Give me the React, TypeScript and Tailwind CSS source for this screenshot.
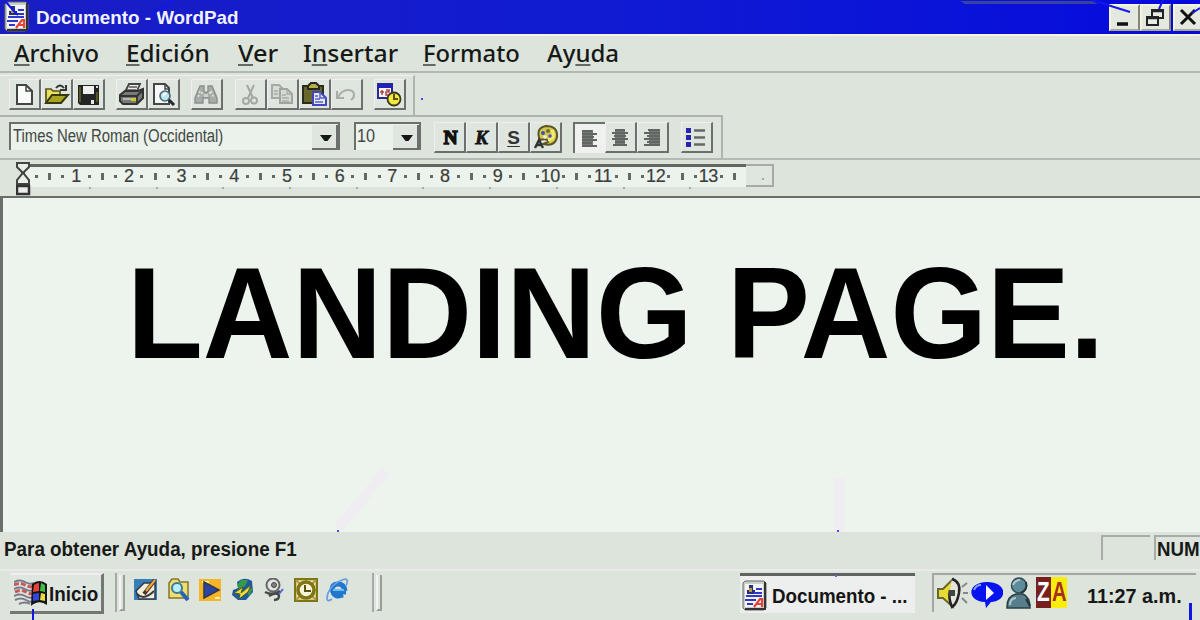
import { useLayoutEffect, useRef } from "react";
import type { ReactNode } from "react";

/* Text squeezed or stretched horizontally to a given width. */
function Fit({ w, className = "", children }: { w: number; className?: string; children: ReactNode }) {
  const ref = useRef<HTMLSpanElement>(null);
  useLayoutEffect(() => {
    const el = ref.current;
    if (el) el.style.transform = `scaleX(${w / el.offsetWidth})`;
  }, [w]);
  return (
    <span className={`block shrink-0 ${className}`} style={{ width: w }}>
      <span ref={ref} className="inline-block origin-left whitespace-nowrap">{children}</span>
    </span>
  );
}

function Svg({ w, h, className = "", children }: { w: number; h: number; className?: string; children: ReactNode }) {
  return (
    <svg width={w} height={h} viewBox={`0 0 ${w} ${h}`} fill="none" className={`block shrink-0 ${className}`}>
      {children}
    </svg>
  );
}

function Tool({ children, pressed = false }: { children?: ReactNode; pressed?: boolean }) {
  return (
    <div
      className={
        pressed
          ? "h-[31px] w-8 shrink-0 border-t-2 border-l-2 border-[#6c706c] bg-[#eef1ee]"
          : "h-[31px] w-8 shrink-0 border-r-2 border-b-2 border-t border-l border-t-[#f1edf1] border-l-[#f1edf1] border-r-[#6c706c] border-b-[#6c706c] bg-[#dfe6df]"
      }
    >
      {children}
    </div>
  );
}

const Group = ({ children, className = "" }: { children: ReactNode; className?: string }) => (
  <div className={`flex shrink-0 ${className}`}>{children}</div>
);

const DocIcon = () => (
  <Svg w={27} h={31}>
    <path d="M2 3 4 1H23L25 3V28L23 30H4L2 28Z" fill="#c8cec8" stroke="#6b6b63" />
    <path d="M24 2V29H4" stroke="#333" strokeWidth="2" />
    <path d="M4 4H22V27H4Z" fill="#f4f5fa" />
    <path d="M6 10H8V5H12V10H14V14H6Z" fill="#263080" />
    <path d="M8 8H11V12H8Z" fill="#b79a42" />
    <path d="M15 9H21M13 13H21M5 16H14M12 16H21M4 20H15M6 24H12" stroke="#3038c8" strokeWidth="2" />
    <path d="M13 27 19 19H21V27M15 24H22" stroke="#e34438" strokeWidth="2.2" />
  </Svg>
);

const NewIcon = () => (
  <Svg w={28} h={28}><path d="M7 5H16L22 11V24H7Z" fill="#fafcfa" stroke="#444" strokeWidth="2" /><path d="M16 5V11H22" stroke="#444" strokeWidth="1.5" /></Svg>
);
const OpenIcon = () => (
  <Svg w={28} h={28}>
    <path d="M4 9H9L11 11H18V22H4Z" fill="#e9e15c" stroke="#55511c" strokeWidth="1.7" />
    <path d="M4 23 10 15H26L19 23Z" fill="#a9a51e" stroke="#39370e" strokeWidth="2" />
    <path d="M14 8Q18 3 22 8M24 5V10H18" stroke="#333" strokeWidth="2" />
  </Svg>
);
const SaveIcon = () => (
  <Svg w={28} h={28}>
    <path d="M4 5H25V25H6L4 23Z" fill="#242424" />
    <path d="M9 6H20V14H9Z" fill="#edf0ed" /><path d="M22 6H24V8H22Z" fill="#ddd" />
    <path d="M6 7V22M23 12V22" stroke="#68661f" strokeWidth="1.5" /><path d="M17 20H20V24H17Z" fill="#e8e8e8" />
  </Svg>
);
const PrintIcon = () => (
  <Svg w={28} h={28}>
    <path d="M8 12 12 4H23L19 13Z" fill="#eef0ee" stroke="#444" strokeWidth="1.8" />
    <path d="M12 7H20M10 10H19" stroke="#555" strokeWidth="1.5" />
    <path d="M3 15 8 11H21L26 9V18L20 24H6L3 21Z" fill="#777c77" stroke="#333" strokeWidth="2" />
    <path d="M4 16H20V23M20 16 25 11" stroke="#333" strokeWidth="1.8" /><path d="M6 19H17" stroke="#c6ccc6" strokeWidth="1.5" /><path d="M14 18H19V21H14Z" fill="#d5c828" />
  </Svg>
);
const PreviewIcon = () => (
  <Svg w={28} h={28}>
    <path d="M5 4H16L20 8V24H5Z" fill="#f6f7f6" stroke="#464646" strokeWidth="2" /><path d="M16 4V9H20" stroke="#464646" strokeWidth="1.5" />
    <circle cx="16" cy="16" r="5" fill="#bae5ef" stroke="#496570" strokeWidth="1.6" /><path d="M14 16 17 13" stroke="#fff" strokeWidth="2" /><path d="M20 20 25 25" stroke="#232733" strokeWidth="3" />
  </Svg>
);
const FindIcon = () => (
  <Svg w={28} h={28}>
    <path d="M8 6H12V11L14 13 16 11V6H20L25 18V23H17V18H11V23H3V18Z" fill="#a9ada9" stroke="#8c908c" strokeWidth="1.4" />
    <path d="M8 11 6 18M19 11 22 18M10 12V16M18 12V16" stroke="#e3e8e3" strokeWidth="1.5" strokeDasharray="2 2" /><path d="M12 14H16V17H12Z" fill="#cdd2cd" />
  </Svg>
);
const CutIcon = () => (
  <Svg w={28} h={28}>
    <path d="M11 5 17 18M18 5 12 18" stroke="#a3a8a3" strokeWidth="2" /><circle cx="10" cy="21" r="3" stroke="#a3a8a3" strokeWidth="2" /><circle cx="18" cy="20.5" r="3" stroke="#a3a8a3" strokeWidth="2" />
  </Svg>
);
const CopyIcon = () => (
  <Svg w={28} h={28}>
    <path d="M4 5H11L15 9V18H4Z" fill="#d5dbd5" stroke="#a5aaa5" strokeWidth="2" /><path d="M12 9H19L24 14V23H12Z" fill="#d5dbd5" stroke="#a0a5a0" strokeWidth="2" />
    <path d="M19 9V14H24M6 11H10M6 14H10M14 15H18M14 18H21M14 21H21" stroke="#a8ada8" strokeWidth="1.3" />
  </Svg>
);
const PasteIcon = () => (
  <Svg w={28} h={28}>
    <path d="M3 6H23V23H3Z" fill="#69672b" stroke="#2c2c1b" strokeWidth="2" /><path d="M8 9V6L11 3H16L19 6V9Z" fill="#b5ae4a" stroke="#28281c" strokeWidth="2" />
    <path d="M13 12H20L26 18V25H13Z" fill="#e5e6fa" stroke="#4048b8" strokeWidth="2" /><path d="M20 12V18H26M15 16H18M15 19H20M15 22H23" stroke="#5960c6" strokeWidth="1.5" />
  </Svg>
);
const UndoIcon = () => (
  <Svg w={28} h={28}><path d="M5 11V18H12M6 17Q10 10 16 10 22 10 22 15 22 18 19 20" stroke="#a8ada8" strokeWidth="2" /></Svg>
);
const DateIcon = () => (
  <Svg w={30} h={30}>
    <path d="M3 4H17V18H3Z" fill="#f7f7fb" stroke="#292c8b" strokeWidth="2" /><path d="M3 4H17V8H3Z" fill="#2222bb" /><path d="M7 10V15M5 12H9M11 10H14V12H11V15H14" stroke="#b14248" strokeWidth="1.5" />
    <circle cx="19" cy="19" r="6.5" fill="#f3e83c" stroke="#39371b" strokeWidth="1.8" /><path d="M19 14V19H23" stroke="#58531d" strokeWidth="2" />
  </Svg>
);
const ColorIcon = () => (
  <Svg w={29} h={28}>
    <path d="M9 17Q4 5 15 3 27 3 26 14 24 24 12 21L17 19Q17 15 9 17Z" fill="#d8c84a" stroke="#5b5627" strokeWidth="2" />
    <path d="M21 7Q25 16 17 17" stroke="#f3eb75" strokeWidth="3" />
    <circle cx="12" cy="10" r="2" fill="#434eb4" /><circle cx="17" cy="8" r="2" fill="#687038" /><circle cx="19" cy="13" r="1.8" fill="#4956b0" /><circle cx="14" cy="14" r="1.8" fill="#f2f1e4" />
    <path d="M4 25 8 17 12 25M6 22H11" stroke="#333" strokeWidth="2.4" />
  </Svg>
);
function AlignIcon({ kind }: { kind: "left" | "center" | "right" }) {
  const rows = kind === "left" ? [[7, 17], [7, 22], [7, 19], [7, 22], [7, 17], [7, 22]] : kind === "center" ? [[9, 19], [6, 22], [8, 20], [6, 22], [9, 19], [7, 21]] : [[10, 22], [6, 22], [9, 22], [6, 22], [9, 22], [6, 22]];
  const x = kind === "left" ? 7 : kind === "center" ? 9 : 11;
  return (
    <Svg w={28} h={28}>
      <path d={kind === "center" ? "M9 6H19V22H9Z" : `M${x} 6H${x + 11}V22H${x}Z`} fill="#757a75" />
      {rows.map(([a, b], i) => <path key={i} d={`M${a} ${7 + i * 3}H${b}`} stroke="#626662" strokeWidth="2" />)}
    </Svg>
  );
}
const BulletIcon = () => (
  <Svg w={28} h={28}>
    <path d="M4 5H9V10H4ZM4 12H9V17H4ZM4 19H9V24H4Z" fill="#2525ad" /><path d="M12 7.5H23M12 14.5H23M12 21.5H23" stroke="#656965" strokeWidth="2.4" />
  </Svg>
);
const Arrow = () => (
  <div className="flex h-[25px] w-[26px] shrink-0 items-center justify-center border-r-2 border-b-2 border-[#6c706c] bg-[#dfe6df] pt-[3px] pl-1">
    <Svg w={12} h={7}><path d="M0 0H12L7.5 6H4.5Z" fill="#171717" /></Svg>
  </div>
);

function WinButton({ children, className = "" }: { children: ReactNode; className?: string }) {
  return <div className={`h-[27px] w-[31px] shrink-0 border-t-2 border-l-2 border-r-2 border-b-2 border-t-[#f5f4dc] border-l-[#f5f4dc] border-r-[#85857a] border-b-[#a9aa91] bg-[#e4e9df] ${className}`}>{children}</div>;
}

function TitleBar() {
  return (
    <header className="relative flex h-[34px] shrink-0 overflow-hidden bg-linear-to-r from-[#191dc4] via-[#101bd2] to-[#050add]">
      <div className="mt-px ml-[3px]"><DocIcon /></div>
      <Fit w={202} className="mt-[6px] ml-[6px] font-['Liberation_Sans',sans-serif] text-[19px] leading-6 font-bold text-[#f0f2ff]">Documento - WordPad</Fit>
      <div className="mt-1 ml-auto flex w-[91px] shrink-0">
        <WinButton><Svg w={27} h={23}><path d="M6 18H17" stroke="#111" strokeWidth="3.5" /></Svg></WinButton>
        <WinButton><Svg w={27} h={23}><path d="M10 4H21V12H10ZM5 11H16V19H5Z" fill="#e8ece5" stroke="#242424" strokeWidth="2" /><path d="M10 5H21M5 12H16" stroke="#242424" strokeWidth="2.5" /></Svg></WinButton>
        <WinButton className="ml-0.5"><Svg w={27} h={23}><path d="M6 4 20 18M20 4 6 18" stroke="#111" strokeWidth="3" /></Svg></WinButton>
      </div>
      <svg className="absolute inset-0" width="1200" height="34" fill="none">
        <path d="M960 1H1092L1098 4H965Z" fill="#39439f" />
        <path d="M1092 0 1114 7 1130 12M1163 0 1159 9M1200 8 1192 13" stroke="#1018ed" strokeWidth="2" />
        <path d="M6 2 12 9 18 15M174 0 150 16" stroke="#1018ed" strokeWidth="2" />
      </svg>
    </header>
  );
}

const menu: [string, string, string, number, string][] = [
  ["", "A", "rchivo", 85, "ml-[14px]"],
  ["", "E", "dición", 84, "ml-[27px]"],
  ["", "V", "er", 40, "ml-[28px]"],
  ["I", "n", "sertar", 95, "ml-[25px]"],
  ["", "F", "ormato", 97, "ml-[25px]"],
  ["Ay", "u", "da", 72, "ml-[27px]"],
];

const NumberedRuler = () => (
  <div className="-mt-px flex h-5 w-[722px] items-center pl-[6px]">
    {Array.from({ length: 54 }, (_, i) => (
      <div key={i} className="flex w-[13.18px] shrink-0 items-center justify-center">
        {i % 4 === 3 ? (
          <span className="font-['Liberation_Sans',sans-serif] text-[18px] leading-5 tracking-[-0.3px] text-[#3c3e3c] [-webkit-text-stroke:0.2px_#3c3e3c]">{(i + 1) / 4}</span>
        ) : i % 4 === 1 ? (
          <span className="h-[7px] w-[3px] bg-[#656965]" />
        ) : (
          <span className="h-[3px] w-[3px] bg-[#656965]" />
        )}
      </div>
    ))}
  </div>
);

function Launchers() {
  return (
    <div className="mt-[7px] ml-[9px] flex h-6 w-[216px] shrink-0 justify-between">
      <Svg w={24} h={24}><path d="M0 1H23V22H0Z" fill="#367eba" /><path d="M2 13 10 5H21V21H5Z" fill="#f1edd8" stroke="#2d384a" strokeWidth="1.5" /><path d="M3 16Q10 23 20 13" stroke="#393b3d" strokeWidth="2" /><path d="M10 16 21 2" stroke="#48372d" strokeWidth="4" /><path d="M12 13 21 2" stroke="#f5a83c" strokeWidth="2" /></Svg>
      <Svg w={23} h={24}><path d="M2 5 5 1H11L13 4H21V20H2Z" fill="#f0de70" stroke="#84742b" strokeWidth="1.5" /><circle cx="10" cy="10" r="5" fill="#b9eff7" stroke="#397a9d" strokeWidth="2" /><path d="M14 14 21 22" stroke="#2463b6" strokeWidth="4" /></Svg>
      <Svg w={24} h={24}><path d="M1 1H23V23H1Z" fill="#f5b529" /><path d="M4 4H11M17 20H22" stroke="#fff0a6" strokeWidth="2" /><path d="M6 4 21 12 6 20Z" fill="#2945a8" stroke="#373743" strokeWidth="1.5" /></Svg>
      <Svg w={24} h={24}><path d="M6 4Q13-2 21 3L22 14 15 22 7 22 1 17 2 12 7 10Z" fill="#2058a1" /><path d="M10 2 17 2 14 8 8 11 6 7ZM16 12 22 10 18 19Z" fill="#359b49" /><path d="M3 15 12 9 10 15 20 7 17 14 8 21 9 16Z" fill="#f5d93a" stroke="#4a641e" /></Svg>
      <Svg w={22} h={24}><circle cx="10" cy="7" r="6.5" fill="#e2e4e4" stroke="#666" strokeWidth="2" /><circle cx="11" cy="7" r="2.5" fill="#808285" stroke="#444" /><path d="M2 14Q10 18 17 13M6 18Q15 13 16 18 16 22 11 22" stroke="#444846" strokeWidth="2.4" /><path d="M16 16 20 11" stroke="#5364c5" strokeWidth="2" /></Svg>
      <Svg w={24} h={24}><path d="M1 1H23V23H1Z" fill="#efe6a2" stroke="#807415" strokeWidth="2.5" /><path d="M2 2 7 7M22 2 17 7M2 22 7 17M22 22 17 17" stroke="#a59b50" strokeWidth="2" /><circle cx="12" cy="12" r="8" fill="#f6f4d9" stroke="#807415" strokeWidth="3.5" /><path d="M11 7V13H17" stroke="#5b5110" strokeWidth="2" /></Svg>
      <Svg w={24} h={24}><path d="M20 14H7Q9 20 17 17M6 12Q6 6 12 6 18 6 19 13" stroke="#2177cb" strokeWidth="5" /><path d="M20 8Q24-1 16 2 6 6 2 15-1 26 6 21" stroke="#6b9ee5" strokeWidth="1.8" /><path d="M7 12H18" stroke="#68bdf2" strokeWidth="2" /></Svg>
    </div>
  );
}

const Grip = ({ className }: { className: string }) => (
  <div className={`mt-0.5 flex h-[39px] w-[11px] shrink-0 gap-[2px] ${className}`}>
    <span className="w-[2px] bg-[#a5aaa5]" />
    <span className="mt-0.5 h-9 w-[6px] border-r-2 border-b-2 border-l-2 border-r-[#999e99] border-b-[#999e99] border-l-[#f5f1f5]" />
  </div>
);

function Taskbar() {
  return (
    <footer className="relative flex h-[49px] shrink-0 bg-[#dce4dc] font-['Liberation_Sans',sans-serif] font-bold">
      <div className="mt-0.5 ml-2.5 flex h-[41px] w-[94px] shrink-0 border-t-2 border-r-[3px] border-b-[3px] border-t-[#f0eef0] border-r-[#747874] border-b-[#747874] bg-[#dfe6df]">
        <Svg w={36} h={32} className="mt-[3px] ml-1">
          <path d="M0 7Q6 4 11 7T20 8M1 14Q7 11 12 14T20 15" stroke="#c45b59" strokeWidth="3" strokeDasharray="5 2" />
          <path d="M0 4Q6 1 11 4T20 5M0 11Q6 8 11 11T20 12M0 18Q6 15 11 18T20 19M1 22Q7 19 12 22T20 23M5 26Q11 23 16 26" stroke="#777989" strokeWidth="2" />
          <path d="M18 6Q25 0 33 6V27Q25 21 17 28Z" fill="#151515" />
          <path d="M20 7Q23 5 25 5V13L19 14Z" fill="#e64235" /><path d="M27 5 31 7V14L26 13Z" fill="#3bbd46" /><path d="M19 16 25 15V22L19 23Z" fill="#3347df" /><path d="M27 15 31 16V23L26 22Z" fill="#e7dc39" />
        </Svg>
        <Fit w={49} className="mt-[7px] -ml-px text-[20px] leading-6 text-[#171717]">Inicio</Fit>
      </div>
      <Grip className="ml-[11px]" />
      <div className="-ml-px"><Launchers /></div>
      <Grip className="ml-[22px]" />
      <div className="mt-0.5 ml-[357px] flex h-10 w-[175px] shrink-0 border-t-[3px] border-[#606460] bg-[#edeeee]">
        <div className="mt-[4px] ml-px"><DocIcon /></div>
        <Fit w={135} className="mt-[8px] ml-1 text-[20px] leading-6 text-[#151515]">Documento - ...</Fit>
      </div>
      <div className="mt-0.5 ml-[17px] flex h-[39px] w-[264px] shrink-0 border-t-2 border-l-2 border-[#a2a7a2] pt-[2px]">
        <Svg w={32} h={34} className="ml-[3px]"><path d="M1 12H6L16 2Q21 16 16 30L6 21H1Z" fill="#e7dc33" stroke="#68672f" strokeWidth="2" /><path d="M15 2Q24 5 22 16T15 30Q11 21 13 13" fill="#e5e5dc" stroke="#222" strokeWidth="2.5" /><path d="M12 13H18V19H12Z" fill="#444" /><path d="M25 10 30 6M26 16H31M25 21 30 26" stroke="#858985" strokeWidth="2" /></Svg>
        <Svg w={32} h={34} className="ml-0.5"><path d="M16 5C37 5 37 24 20 25L15 31 14 25C-5 24-4 5 16 5Z" fill="#0713ef" /><path d="M15 8 23 16 15 23Z" fill="#f5f6ff" /><path d="M3 13Q5 8 10 8" stroke="#88a1ff" strokeWidth="2" /></Svg>
        <Svg w={27} h={34} className="ml-[3px]"><path d="M1 30Q1 19 10 17H17Q24 20 24 31H1Z" fill="#587d8b" stroke="#283e47" strokeWidth="1.5" /><path d="M4 28Q4 21 10 21" stroke="#a9c7cc" strokeWidth="2" /><circle cx="13" cy="8.5" r="7.5" fill="#608b99" stroke="#304c57" strokeWidth="1.5" /><path d="M7 8Q9 3 14 3" stroke="#afcbd0" strokeWidth="2" /><path d="M20 5Q22 13 15 16M20 22 24 29" stroke="#26353c" strokeWidth="2" /></Svg>
        <div className="ml-[3px] flex h-[31px] w-[31px] shrink-0 bg-[#f8ed0d] font-['Liberation_Sans',sans-serif] text-[27px] leading-[31px]">
          <span className="w-[15px] bg-[#782020] pl-px text-white"><Fit w={13}>Z</Fit></span>
          <Fit w={15} className="ml-px text-[#a82f20]">A</Fit>
        </div>
        <Fit w={95} className="mt-[7px] ml-[20px] text-[20px] leading-6 text-[#171717]">11:27 a.m.</Fit>
      </div>
      <span className="absolute bottom-0 left-8 h-[11px] w-[2px] bg-[#1017e3]" />
      <span className="absolute right-2 bottom-0 h-[17px] w-[3px] bg-[#1017e3]" />
      <span className="absolute top-1 left-[835px] h-[2px] w-[2px] bg-[#6666ed]" />
    </footer>
  );
}

export default function App() {
  return (
    <main className="flex h-[620px] w-[1200px] flex-col overflow-hidden bg-[#dce4dc]">
      <TitleBar />
      <nav className="flex h-[37px] shrink-0 border-t-2 border-[#f5f4e5] font-['Noto_Sans',sans-serif] text-[24px] leading-8 font-medium text-[#171917]">
        {menu.map(([before, key, after, w, margin]) => (
          <Fit key={key} w={w} className={`mt-px ${margin}`}>
            {before}<span className="underline decoration-[#656965] decoration-2 underline-offset-[2px]">{key}</span>{after}
          </Fit>
        ))}
      </nav>

      <section className="relative flex h-[44px] shrink-0 border-t-2 border-[#b2b9b2] pt-0.5">
        <div className="flex w-[415px] border-t border-r-2 border-t-[#f0eef0] border-r-[#aeb4ae] pt-[3px] pl-[9px]">
          <Group><Tool><NewIcon /></Tool><Tool><OpenIcon /></Tool><Tool><SaveIcon /></Tool></Group>
          <Group className="ml-[11px]"><Tool><PrintIcon /></Tool><Tool><PreviewIcon /></Tool></Group>
          <Group className="ml-[11px]"><Tool><FindIcon /></Tool></Group>
          <Group className="ml-[12px]"><Tool><CutIcon /></Tool><Tool><CopyIcon /></Tool><Tool><PasteIcon /></Tool><Tool><UndoIcon /></Tool></Group>
          <Group className="ml-[11px]"><Tool><DateIcon /></Tool></Group>
        </div>
        <span className="absolute top-[25px] left-[421px] h-[2px] w-[2px] bg-[#4549e8]" />
      </section>

      <section className="flex h-[43px] shrink-0">
        <div className="flex w-[723px] border-t-2 border-r-2 border-[#adb3ad] pt-[5px] pl-[9px]">
          <div className="flex h-[28px] w-[331px] shrink-0 border-t-2 border-r-2 border-l-2 border-[#6c706c] bg-[#eaf2eb] pt-px">
            <Fit w={210} className="ml-0.5 font-['Liberation_Sans',sans-serif] text-[18px] leading-[23px] text-[#444744]">Times New Roman (Occidental)</Fit>
            <div className="ml-auto"><Arrow /></div>
          </div>
          <div className="ml-[14px] flex h-[28px] w-[67px] shrink-0 border-t-2 border-r-2 border-l-2 border-[#6c706c] bg-[#eaf2eb] pt-px">
            <Fit w={18} className="ml-px font-['Liberation_Sans',sans-serif] text-[18px] leading-[23px] text-[#444744]">10</Fit>
            <div className="ml-auto"><Arrow /></div>
          </div>
          <Group className="ml-[13px] text-center font-['Liberation_Serif',serif] text-[19px] leading-[29px] font-bold text-[#171717]">
            <Tool><span className="block pl-0.5 [-webkit-text-stroke:1.6px_#111]">N</span></Tool>
            <Tool><span className="block italic [-webkit-text-stroke:0.8px_#111]">K</span></Tool>
            <Tool><span className="block font-['Liberation_Sans',sans-serif] text-[#333] underline underline-offset-2">S</span></Tool>
            <Tool><ColorIcon /></Tool>
          </Group>
          <Group className="ml-[11px]"><Tool pressed><AlignIcon kind="left" /></Tool><Tool><AlignIcon kind="center" /></Tool><Tool><AlignIcon kind="right" /></Tool></Group>
          <Group className="ml-[12px]"><Tool><BulletIcon /></Tool></Group>
        </div>
      </section>

      <section className="relative h-[38px] shrink-0 border-t-2 border-[#b3bab3]">
        <div className="mt-1 ml-6 flex h-6 w-[750px]">
          <div className="h-[23px] w-[722px] shrink-0 border-t-[3px] border-[#626662] bg-[#ebf3ec]"><NumberedRuler /></div>
          <div className="h-[23px] w-7 border-t-2 border-r-2 border-b-2 border-[#a6aba6] bg-[#dfe5df] pt-3 pl-4"><div className="h-0.5 w-0.5 bg-[#a6aba6]" /></div>
        </div>
        <div className="-mt-px ml-[89px] flex gap-[64.7px]">
          {Array.from({ length: 10 }, (_, i) => <span key={i} className="h-[2px] w-[2px] shrink-0 bg-[#a6aca6]" />)}
        </div>
        <svg className="absolute top-0 left-4" width="15" height="36" fill="none">
          <path d="M1 3H13V7L8 12V14L13 20V24H1V20L6 14V12L1 7Z" fill="#e9efe9" stroke="#424642" strokeWidth="2" /><path d="M1 26H13V34H1Z" fill="#e9efe9" stroke="#333" strokeWidth="2.5" />
        </svg>
      </section>

      <section className="relative h-[336px] shrink-0 border-t-2 border-l-[3px] border-[#6b6f6b] bg-[#ecf4ed]">
        <h1 className="mt-[43px] ml-[124px] font-['Liberation_Sans',sans-serif] text-[129px] leading-[144px] font-bold text-black"><Fit w={977}>LANDING PAGE.</Fit></h1>
        <svg className="absolute bottom-0 left-0" width="1197" height="66" fill="none">
          <path d="M383 5 335 62" stroke="#efedf1" strokeWidth="10" /><path d="M836 12V66" stroke="#efedf1" strokeWidth="11" /><path d="M334 65H336M834 65H836" stroke="#484be7" strokeWidth="2" />
        </svg>
      </section>

      <section className="flex h-[39px] shrink-0 border-b-2 border-[#e9eae9] font-['Liberation_Sans',sans-serif] font-bold text-[#171917]">
        <Fit w={293} className="mt-[5px] ml-1 text-[20px] leading-6">Para obtener Ayuda, presione F1</Fit>
        <div className="mt-[3px] ml-[804px] h-[25px] w-[49px] shrink-0 border-t-2 border-l-2 border-[#a7aca7]" />
        <div className="mt-[3px] ml-[4px] h-[25px] w-[46px] shrink-0 border-t-2 border-l-2 border-[#a7aca7]">
          <Fit w={43} className="ml-px text-[20px] leading-6">NUM</Fit>
        </div>
      </section>
      <Taskbar />
    </main>
  );
}
